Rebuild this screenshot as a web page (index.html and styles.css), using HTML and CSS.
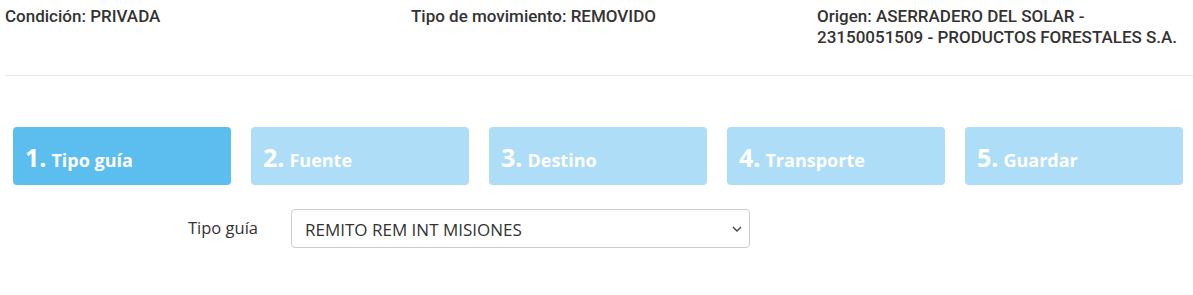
FILE: index.html
```html
<!DOCTYPE html>
<html lang="es">
<head>
<meta charset="utf-8">
<link rel="stylesheet" href="styles.css">
</head>
<body>
<div class="page">
  <div class="info">
    <div class="info-col">Condición: PRIVADA</div>
    <div class="info-col">Tipo de movimiento: REMOVIDO</div>
    <div class="info-col">Origen: ASERRADERO DEL SOLAR - 23150051509 - PRODUCTOS FORESTALES S.A.</div>
  </div>
  <hr class="sep">
  <div class="steps">
    <div class="step active"><span class="num">1.</span><span class="lbl">Tipo guía</span></div>
    <div class="step"><span class="num">2.</span><span class="lbl">Fuente</span></div>
    <div class="step"><span class="num">3.</span><span class="lbl">Destino</span></div>
    <div class="step"><span class="num">4.</span><span class="lbl">Transporte</span></div>
    <div class="step"><span class="num">5.</span><span class="lbl">Guardar</span></div>
  </div>
  <div class="form-row">
    <label class="form-label">Tipo guía</label>
    <div class="select">
      <span class="select-text">REMITO REM INT MISIONES</span>
      <svg class="chev" width="10" height="6" viewBox="0 0 10 6"><path d="M1 1l4 4 4-4" fill="none" stroke="#444" stroke-width="1.4"/></svg>
    </div>
  </div>
</div>
</body>
</html>
```
FILE: styles.css
```css
html, body {
  margin: 0;
  padding: 0;
  background: #fff;
}
.page {
  width: 1193px;
  height: 295px;
  overflow: hidden;
}
.info {
  display: grid;
  grid-template-columns: 406px 406px 376px;
  padding: 6px 0 0 5px;
  font-family: Roboto, "Liberation Sans", sans-serif;
  font-weight: 500;
  font-size: 17px;
  line-height: 21px;
  color: #333;
  height: 63px;
}
.sep {
  margin: 6px 0 0 5px;
  border: 0;
  border-top: 1px solid #e5e5e5;
  height: 0;
}
.steps {
  display: flex;
  gap: 20px;
  padding: 51px 0 0 13px;
}
.step {
  width: 218px;
  height: 58px;
  box-sizing: border-box;
  border-radius: 4px;
  background: #aeddf7;
  color: #fff;
  font-family: "Open Sans", sans-serif;
  font-weight: 700;
  display: flex;
  align-items: baseline;
  padding: 15px 0 0 12px;
}
.step.active {
  background: #5cbdef;
}
.num {
  font-size: 25px;
  line-height: 30px;
  margin-right: 5px;
}
.lbl {
  font-size: 18px;
}
.form-row {
  display: flex;
  align-items: center;
  padding: 24px 0 0 188px;
}
.form-label {
  font-family: "Open Sans", sans-serif;
  font-size: 16.5px;
  color: #333;
  width: 103px;
  margin-top: -3px;
}
.select {
  width: 459px;
  height: 39px;
  box-sizing: border-box;
  border: 1px solid #ccc;
  border-radius: 4px;
  display: flex;
  align-items: center;
  justify-content: space-between;
  padding: 1px 7px 0 13px;
  font-family: "Open Sans", sans-serif;
  font-size: 17px;
  color: #333;
}
```
